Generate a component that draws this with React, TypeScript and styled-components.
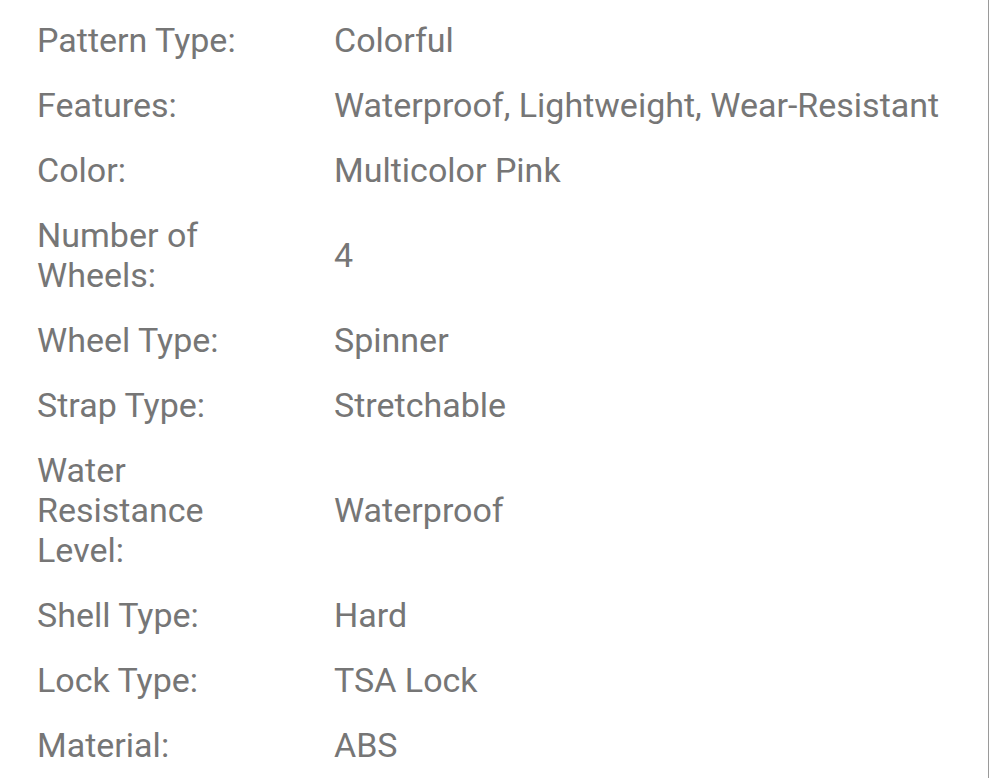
import React from "react";
import styled, { createGlobalStyle } from "styled-components";

const GlobalStyle = createGlobalStyle`
  html, body {
    margin: 0;
    padding: 0;
    background: #ffffff;
  }
  * { box-sizing: border-box; }
`;

const Panel = styled.div`
  width: 989px;
  min-height: 778px;
  background: #ffffff;
  border-right: 1px solid #9a9a9a;
  padding-top: 7.5px;
  font-family: Roboto, "Liberation Sans", Arial, sans-serif;
  font-size: 34px;
  line-height: 40px;
  color: #767676;
`;

const Row = styled.div`
  display: grid;
  grid-template-columns: 297px 1fr;
  align-items: center;
  padding: 12.5px 0 12.5px 37px;
`;

const Label = styled.div`
  max-width: 240px;
`;

const Value = styled.div``;

const specs: [string, string][] = [
  ["Pattern Type:", "Colorful"],
  ["Features:", "Waterproof, Lightweight, Wear-Resistant"],
  ["Color:", "Multicolor Pink"],
  ["Number of Wheels:", "4"],
  ["Wheel Type:", "Spinner"],
  ["Strap Type:", "Stretchable"],
  ["Water Resistance Level:", "Waterproof"],
  ["Shell Type:", "Hard"],
  ["Lock Type:", "TSA Lock"],
  ["Material:", "ABS"],
];

export default function App() {
  return (
    <>
      <GlobalStyle />
      <Panel>
        {specs.map(([k, v]) => (
          <Row key={k}>
            <Label>{k}</Label>
            <Value>{v}</Value>
          </Row>
        ))}
      </Panel>
    </>
  );
}
